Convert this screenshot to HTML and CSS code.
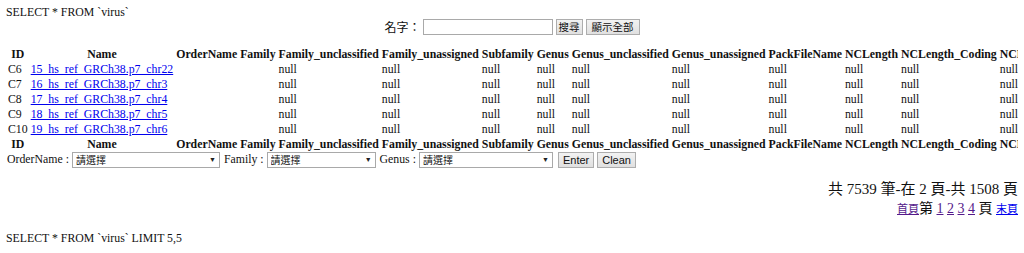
FILE: index.html
```html
<!DOCTYPE html>
<html>
<head>
<meta charset="utf-8">
<title>virus</title>
<link rel="stylesheet" href="styles.css">
</head>
<body>
<div class="sql">SELECT * FROM `virus`</div>
<form class="search">
  <label class="search-label">名字：</label>
  <input class="text-input" type="text">
  <button class="btn btn-search" type="button">搜尋</button>
  <button class="btn btn-all" type="button">顯示全部</button>
</form>
<table class="grid">
  <thead>
    <tr><th>ID</th><th>Name</th><th>OrderName</th><th>Family</th><th>Family_unclassified</th><th>Family_unassigned</th><th>Subfamily</th><th>Genus</th><th>Genus_unclassified</th><th>Genus_unassigned</th><th>PackFileName</th><th>NCLength</th><th>NCLength_Coding</th><th>NCLength_Noncoding</th><th>Segments</th><th>Description</th></tr>
  </thead>
  <tbody>
    <tr><td>C6</td><td><a href="#">15_hs_ref_GRCh38.p7_chr22</a></td><td></td><td></td><td>null</td><td>null</td><td>null</td><td>null</td><td>null</td><td>null</td><td>null</td><td>null</td><td>null</td><td>null</td><td>null</td><td>null</td></tr>
    <tr><td>C7</td><td><a href="#">16_hs_ref_GRCh38.p7_chr3</a></td><td></td><td></td><td>null</td><td>null</td><td>null</td><td>null</td><td>null</td><td>null</td><td>null</td><td>null</td><td>null</td><td>null</td><td>null</td><td>null</td></tr>
    <tr><td>C8</td><td><a href="#">17_hs_ref_GRCh38.p7_chr4</a></td><td></td><td></td><td>null</td><td>null</td><td>null</td><td>null</td><td>null</td><td>null</td><td>null</td><td>null</td><td>null</td><td>null</td><td>null</td><td>null</td></tr>
    <tr><td>C9</td><td><a href="#">18_hs_ref_GRCh38.p7_chr5</a></td><td></td><td></td><td>null</td><td>null</td><td>null</td><td>null</td><td>null</td><td>null</td><td>null</td><td>null</td><td>null</td><td>null</td><td>null</td><td>null</td></tr>
    <tr><td>C10</td><td><a href="#">19_hs_ref_GRCh38.p7_chr6</a></td><td></td><td></td><td>null</td><td>null</td><td>null</td><td>null</td><td>null</td><td>null</td><td>null</td><td>null</td><td>null</td><td>null</td><td>null</td><td>null</td></tr>
  </tbody>
  <tfoot>
    <tr><th>ID</th><th>Name</th><th>OrderName</th><th>Family</th><th>Family_unclassified</th><th>Family_unassigned</th><th>Subfamily</th><th>Genus</th><th>Genus_unclassified</th><th>Genus_unassigned</th><th>PackFileName</th><th>NCLength</th><th>NCLength_Coding</th><th>NCLength_Noncoding</th><th>Segments</th><th>Description</th></tr>
  </tfoot>
</table>
<form class="filter">
  <span class="flabel">OrderName :</span>
  <span class="sel sel-order"><select><option>請選擇</option></select></span>
  <span class="flabel">Family :</span>
  <span class="sel sel-family"><select><option>請選擇</option></select></span>
  <span class="flabel">Genus :</span>
  <span class="sel sel-genus"><select><option>請選擇</option></select></span>
  <button class="btn btn-latin" type="button">Enter</button>
  <button class="btn btn-latin" type="button">Clean</button>
</form>
<div class="pager">
  <div class="pager-total">共 7539 筆-在 2 頁-共 1508 頁</div>
  <div class="pager-links"><a class="small visited" href="#">首頁</a>第 <a class="visited" href="#">1</a> <a class="visited" href="#">2</a> <a class="visited" href="#">3</a> <a class="visited" href="#">4</a> 頁 <a class="small" href="#">末頁</a></div>
</div>
<div class="sql sql-bottom">SELECT * FROM `virus` LIMIT 5,5</div>
</body>
</html>
```

FILE: styles.css
```css
html {
  overflow: hidden;
  background: #fff;
}
body {
  margin: 6px;
  font-family: "Liberation Serif", "Noto Sans CJK TC", serif;
  font-size: 11.8px;
  color: #111;
}
.sql {
  line-height: 13px;
  height: 13px;
}
.search {
  display: flex;
  justify-content: center;
  align-items: center;
  gap: 3px;
  margin: 0;
  height: 16px;
}
.search-label {
  font-family: "Noto Sans CJK TC", sans-serif;
  font-size: 12px;
  line-height: 16px;
  margin-right: -1px;
}
.text-input {
  width: 130px;
  height: 16px;
  box-sizing: border-box;
  border: 1px solid #a9a9a9;
  padding: 0 2px;
  margin: 0;
  background: #fff;
}
.btn {
  height: 16px;
  box-sizing: border-box;
  margin: 0;
  padding: 0 3px;
  border: 1px solid #adadad;
  border-radius: 0;
  background: linear-gradient(#f2f2f2, #e0e0e0);
  font-family: "Noto Sans CJK TC", sans-serif;
  font-size: 10px;
  line-height: 14px;
  color: #111;
}
.btn-search {
  padding: 0 2px;
  font-size: 10.5px;
}
.btn-all {
  padding: 0 5px;
  font-size: 10.5px;
}
.btn-latin {
  font-family: "Liberation Sans", "Noto Sans CJK TC", sans-serif;
  font-size: 11px;
  padding: 0 4px;
}
.grid {
  border-collapse: separate;
  border-spacing: 1px 0;
  margin: 11.5px 0 0 0;
  white-space: nowrap;
}
.grid th,
.grid td {
  padding: 0 1px;
  line-height: 15px;
  height: 15px;
}
.grid th {
  font-weight: bold;
  text-align: center;
}
.grid td {
  text-align: left;
}
a {
  color: #0000ee;
}
a.visited {
  color: #551a8b;
}
.filter {
  display: flex;
  align-items: center;
  height: 16px;
  margin: 0;
  white-space: nowrap;
}
.flabel {
  margin: 0 3px 0 1px;
}
.sel {
  position: relative;
  display: inline-block;
  height: 16px;
  margin-right: 3px;
}
.sel select {
  appearance: none;
  -webkit-appearance: none;
  height: 16px;
  box-sizing: border-box;
  border: 1px solid #a9a9a9;
  border-radius: 0;
  background: #fff;
  margin: 0;
  padding: 0 0 0 3px;
  font-family: "Noto Sans CJK TC", sans-serif;
  font-size: 10px;
  line-height: 14px;
  color: #111;
}
.sel::after {
  content: "▼";
  position: absolute;
  right: 4px;
  top: 3px;
  font-size: 7px;
  line-height: 10px;
  color: #222;
  pointer-events: none;
}
.sel-order select { width: 148px; }
.sel-family select { width: 109px; }
.sel-genus select { width: 134px; }
.filter .btn-latin { margin-left: 2px; }
.filter .btn-latin + .btn-latin { margin-left: 3px; }
.pager {
  margin-top: 12.5px;
  text-align: right;
}
.pager-total {
  font-size: 15px;
  line-height: 19px;
}
.pager-links {
  font-size: 14px;
  line-height: 19px;
}
.pager-links .small {
  font-size: 11px;
}
.sql-bottom {
  margin-top: 13px;
}
```
